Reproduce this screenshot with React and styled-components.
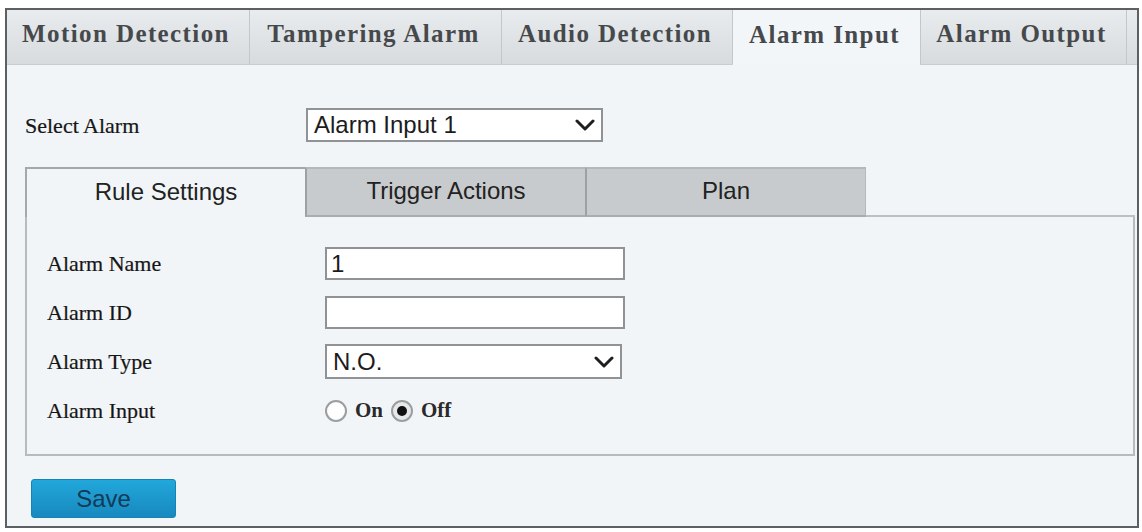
import React from "react";
import styled, { createGlobalStyle } from "styled-components";

const GlobalStyle = createGlobalStyle`
  html, body {
    margin: 0;
    padding: 0;
    background: #ffffff;
  }
  * {
    box-sizing: border-box;
  }
`;

const topTabs = [
  { label: "Motion Detection", width: 243 },
  { label: "Tampering Alarm", width: 252 },
  { label: "Audio Detection", width: 231 },
  { label: "Alarm Input", width: 188, active: true },
  { label: "Alarm Output", width: 206 },
];

const ruleTabs = [
  { label: "Rule Settings", width: 280, active: true },
  { label: "Trigger Actions", width: 280 },
  { label: "Plan", width: 281 },
];

const Chevron = () => (
  <svg width="20" height="12" viewBox="0 0 20 12">
    <polyline
      points="2,2 10,10 18,2"
      fill="none"
      stroke="#1f1f1f"
      strokeWidth="3"
      strokeLinecap="round"
      strokeLinejoin="round"
    />
  </svg>
);

export default function App() {
  return (
    <>
      <GlobalStyle />
      <Frame>
        <TopTabBar>
          {topTabs.map(tab => (
            <TopTab key={tab.label} $width={tab.width} $active={tab.active}>
              {tab.label}
            </TopTab>
          ))}
          <TopTabFiller />
        </TopTabBar>

        <Content>
          <SelectRow>
            <SelectLabel>Select Alarm</SelectLabel>
            <SelectBox $width={297}>
              <span>Alarm Input 1</span>
              <Chevron />
            </SelectBox>
          </SelectRow>

          <RuleTabBar>
            {ruleTabs.map(tab => (
              <RuleTab key={tab.label} $width={tab.width} $active={tab.active}>
                {tab.label}
              </RuleTab>
            ))}
            <RuleTabFiller />
          </RuleTabBar>

          <Panel>
            <FormRow>
              <FieldLabel>Alarm Name</FieldLabel>
              <TextBox>1</TextBox>
            </FormRow>
            <FormRow>
              <FieldLabel>Alarm ID</FieldLabel>
              <TextBox />
            </FormRow>
            <FormRow>
              <FieldLabel>Alarm Type</FieldLabel>
              <SelectBox $width={297} $height={35}>
                <span>N.O.</span>
                <Chevron />
              </SelectBox>
            </FormRow>
            <FormRow>
              <FieldLabel>Alarm Input</FieldLabel>
              <RadioGroup>
                <RadioItem>
                  <RadioCircle />
                  <RadioText>On</RadioText>
                </RadioItem>
                <RadioItem>
                  <RadioCircle $checked />
                  <RadioText>Off</RadioText>
                </RadioItem>
              </RadioGroup>
            </FormRow>
          </Panel>

          <SaveButton>Save</SaveButton>
        </Content>
      </Frame>
    </>
  );
}

const Frame = styled.div`
  margin: 8px 0 0 5px;
  width: 1134px;
  height: 520px;
  border: 2px solid #5c6063;
  background: #f2f5f7;
  display: flex;
  flex-direction: column;
`;

const TopTabBar = styled.div`
  display: flex;
  height: 55px;
  background: linear-gradient(#e9ecee, #d7dbde);
  border-bottom: 1px solid #c9cdd0;
`;

const TopTab = styled.div`
  width: ${p => p.$width}px;
  display: flex;
  align-items: center;
  justify-content: center;
  padding-bottom: 6px;
  padding-right: 4px;
  border-right: 1px solid #c3c7ca;
  font-family: "Liberation Serif", "Times New Roman", serif;
  font-weight: bold;
  font-size: 25px;
  letter-spacing: 1.4px;
  color: #46494c;
  background: ${p => (p.$active ? "#f3f6f8" : "transparent")};
  margin-bottom: ${p => (p.$active ? "-1px" : "0")};
`;

const TopTabFiller = styled.div`
  flex: 1;
`;

const Content = styled.div`
  flex: 1;
  padding: 43px 2px 0 18px;
  display: flex;
  flex-direction: column;
`;

const SelectRow = styled.div`
  display: flex;
  align-items: center;
  height: 34px;
`;

const SelectLabel = styled.div`
  width: 281px;
  font-family: "Liberation Serif", "Times New Roman", serif;
  font-size: 22px;
  color: #161616;
  padding-top: 2px;
  -webkit-text-stroke: 0.2px #161616;
`;

const SelectBox = styled.div`
  width: ${p => p.$width}px;
  height: ${p => p.$height || 34}px;
  background: #ffffff;
  border: 2px solid #8f9396;
  display: flex;
  align-items: center;
  justify-content: space-between;
  padding: 0 6px 0 6px;
  font-family: "Liberation Sans", Arial, sans-serif;
  font-size: 24px;
  color: #1c1c1c;
`;

const RuleTabBar = styled.div`
  display: flex;
  margin-top: 25px;
  height: 50px;
`;

const RuleTab = styled.div`
  width: ${p => p.$width}px;
  display: flex;
  align-items: center;
  justify-content: center;
  padding-bottom: 2px;
  font-family: "Liberation Sans", Arial, sans-serif;
  font-size: 24px;
  color: #222;
  border-top: 2px solid ${p => (p.$active ? "#a4a8ab" : "#b4b8bb")};
  border-left: 2px solid ${p => (p.$active ? "#a4a8ab" : "#9da1a4")};
  border-bottom: ${p => (p.$active ? "none" : "2px solid #a9adb0")};
  background: ${p => (p.$active ? "#f2f5f7" : "#c8cbce")};
  &:nth-child(3) {
    border-right: 1px solid #b4b8bb;
  }
`;

const RuleTabFiller = styled.div`
  flex: 1;
  border-bottom: 2px solid #bcc0c3;
`;

const Panel = styled.div`
  border: 2px solid #b7bbbe;
  border-top: none;
  padding: 22px 0 19px 20px;
  display: flex;
  flex-direction: column;
`;

const FormRow = styled.div`
  display: flex;
  align-items: center;
  height: 49px;
`;

const FieldLabel = styled.div`
  width: 278px;
  font-family: "Liberation Serif", "Times New Roman", serif;
  font-size: 22px;
  color: #161616;
  -webkit-text-stroke: 0.2px #161616;
`;

const TextBox = styled.div`
  width: 300px;
  height: 33px;
  background: #ffffff;
  border: 2px solid #8f9396;
  padding: 0 4px;
  display: flex;
  align-items: center;
  font-family: "Liberation Sans", Arial, sans-serif;
  font-size: 24px;
  color: #1c1c1c;
`;

const RadioGroup = styled.div`
  display: flex;
  align-items: center;
  gap: 8px;
`;

const RadioItem = styled.div`
  display: flex;
  align-items: center;
  gap: 8px;
`;

const RadioCircle = styled.span`
  position: relative;
  width: 22px;
  height: 22px;
  border-radius: 50%;
  border: 2px solid #9a9ea1;
  background: ${p => (p.$checked ? "#e6e8ea" : "#ffffff")};
  &::after {
    content: "";
    display: ${p => (p.$checked ? "block" : "none")};
    position: absolute;
    left: 4px;
    top: 4px;
    width: 10px;
    height: 10px;
    border-radius: 50%;
    background: #111;
  }
`;

const RadioText = styled.span`
  font-family: "Liberation Serif", "Times New Roman", serif;
  font-weight: bold;
  font-size: 21px;
  color: #2a2a2a;
`;

const SaveButton = styled.button`
  margin-top: 23px;
  margin-left: 6px;
  width: 145px;
  height: 39px;
  border: 1px solid #1583b5;
  border-radius: 3px;
  background: linear-gradient(#22a7da, #1789bf);
  font-family: "Liberation Sans", Arial, sans-serif;
  font-size: 24px;
  color: #143a57;
  padding: 0;
  cursor: pointer;
`;
